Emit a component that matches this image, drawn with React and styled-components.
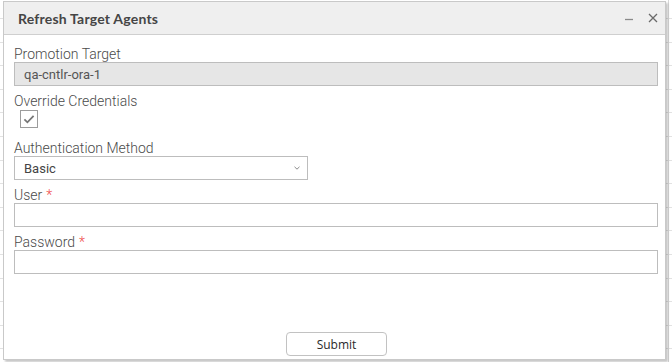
import React from 'react';
import styled, { createGlobalStyle } from 'styled-components';

const GlobalStyle = createGlobalStyle`
  html, body {
    margin: 0;
    padding: 0;
    background: #ffffff;
  }
  body {
    width: 672px;
    height: 362px;
    overflow: hidden;
    font-family: Roboto, "Noto Sans", sans-serif;
  }
`;

const Backdrop = styled.div`
  width: 672px;
  height: 362px;
  box-sizing: border-box;
  padding: 1px 0 0 3px;
  background:
    linear-gradient(to right, transparent 668px, #d8d8d8 668px, #d8d8d8 669px, transparent 669px),
    repeating-linear-gradient(to bottom, transparent 0, transparent 18px, #e2e2e2 18px, #e2e2e2 19px, transparent 19px, transparent 23.6px);
`;

const Window = styled.div`
  width: 663px;
  height: 359px;
  box-sizing: border-box;
  display: flex;
  flex-direction: column;
  background: #ffffff;
  border: 1px solid #c9c9c9;
  box-shadow: 2px 2px 2px rgba(0, 0, 0, 0.22);
`;

const Header = styled.div`
  height: 32px;
  display: flex;
  align-items: center;
  padding: 0 3px 0 14px;
  background: #efefef;
  border-bottom: 1px solid #cfcfcf;
`;

const Title = styled.div`
  flex: 1;
  font-family: Lato, "Open Sans", sans-serif;
  font-weight: 700;
  font-size: 14px;
  color: #454545;
  letter-spacing: 0.2px;
`;

const HeaderButton = styled.button`
  width: 18px;
  height: 18px;
  margin-left: 6px;
  padding: 0;
  border: none;
  background: none;
  display: flex;
  align-items: center;
  justify-content: center;
  color: #6f6f6f;
`;

const Body = styled.div`
  flex: 1;
  display: flex;
  flex-direction: column;
  gap: 7px;
  padding: 11px 7px 0 10px;
`;

const Field = styled.div`
  display: flex;
  flex-direction: column;
`;

const Label = styled.label`
  font-size: 14px;
  font-weight: 300;
  line-height: 16px;
  color: #4a4a4a;
`;

const Required = styled.span`
  color: #ef4b4b;
  margin-left: 4px;
`;

const Input = styled.input`
  box-sizing: border-box;
  width: 100%;
  height: 24px;
  margin: 0;
  padding: 0 9px;
  border: 1px solid #bdbdbd;
  background: ${p => (p.readOnly ? '#e6e6e6' : '#ffffff')};
  font-family: Roboto, "Noto Sans", sans-serif;
  font-size: 13px;
  color: #555555;
  outline: none;
`;

const SelectBox = styled.div`
  box-sizing: border-box;
  width: 294px;
  height: 24px;
  display: flex;
  align-items: center;
  padding: 0 7px 0 9px;
  border: 1px solid #bdbdbd;
  font-size: 13px;
  color: #444444;
`;

const SelectValue = styled.span`
  flex: 1;
`;

const CheckRow = styled.div`
  margin: 1px 0 5px 6px;
`;

const CheckBox = styled.div`
  box-sizing: border-box;
  width: 18px;
  height: 18px;
  border: 1px solid #9c9c9c;
  display: flex;
  align-items: center;
  justify-content: center;
  background: #ffffff;
`;

const Footer = styled.div`
  display: flex;
  justify-content: center;
  padding: 0 0 3px 4px;
`;

const SubmitButton = styled.button`
  box-sizing: border-box;
  width: 101px;
  height: 24px;
  border: 1px solid #c2c2c2;
  border-radius: 4px;
  background: #ffffff;
  font-family: "Open Sans", "DejaVu Sans", sans-serif;
  font-size: 12px;
  color: #2a2a2a;
`;

const MinusIcon = () => (
  <svg width="10" height="10" viewBox="0 0 10 10">
    <path d="M1 6.5h8" stroke="#8a8a8a" strokeWidth="1.3" />
  </svg>
);

const CloseIcon = () => (
  <svg width="10" height="10" viewBox="0 0 10 10">
    <path d="M1 1l8 8M9 1l-8 8" stroke="#6a6a6a" strokeWidth="1.3" />
  </svg>
);

const Chevron = () => (
  <svg width="6" height="4" viewBox="0 0 6 4">
    <path d="M0.5 0.8l2.5 2.4 2.5-2.4" fill="none" stroke="#8a8a8a" strokeWidth="1" />
  </svg>
);

const Check = () => (
  <svg width="12" height="10" viewBox="0 0 12 10">
    <path d="M1.4 5.4l3 2.9 6.2-6.4" fill="none" stroke="#777777" strokeWidth="1.8" />
  </svg>
);

export default function App() {
  return (
    <>
      <GlobalStyle />
      <Backdrop>
        <Window>
          <Header>
            <Title>Refresh Target Agents</Title>
            <HeaderButton><MinusIcon /></HeaderButton>
            <HeaderButton><CloseIcon /></HeaderButton>
          </Header>
          <Body>
            <Field>
              <Label>Promotion Target</Label>
              <Input readOnly value="qa-cntlr-ora-1" />
            </Field>
            <Field>
              <Label>Override Credentials</Label>
              <CheckRow>
                <CheckBox><Check /></CheckBox>
              </CheckRow>
            </Field>
            <Field>
              <Label>Authentication Method</Label>
              <SelectBox>
                <SelectValue>Basic</SelectValue>
                <Chevron />
              </SelectBox>
            </Field>
            <Field>
              <Label>User<Required>*</Required></Label>
              <Input />
            </Field>
            <Field>
              <Label>Password<Required>*</Required></Label>
              <Input type="password" />
            </Field>
          </Body>
          <Footer>
            <SubmitButton>Submit</SubmitButton>
          </Footer>
        </Window>
      </Backdrop>
    </>
  );
}
